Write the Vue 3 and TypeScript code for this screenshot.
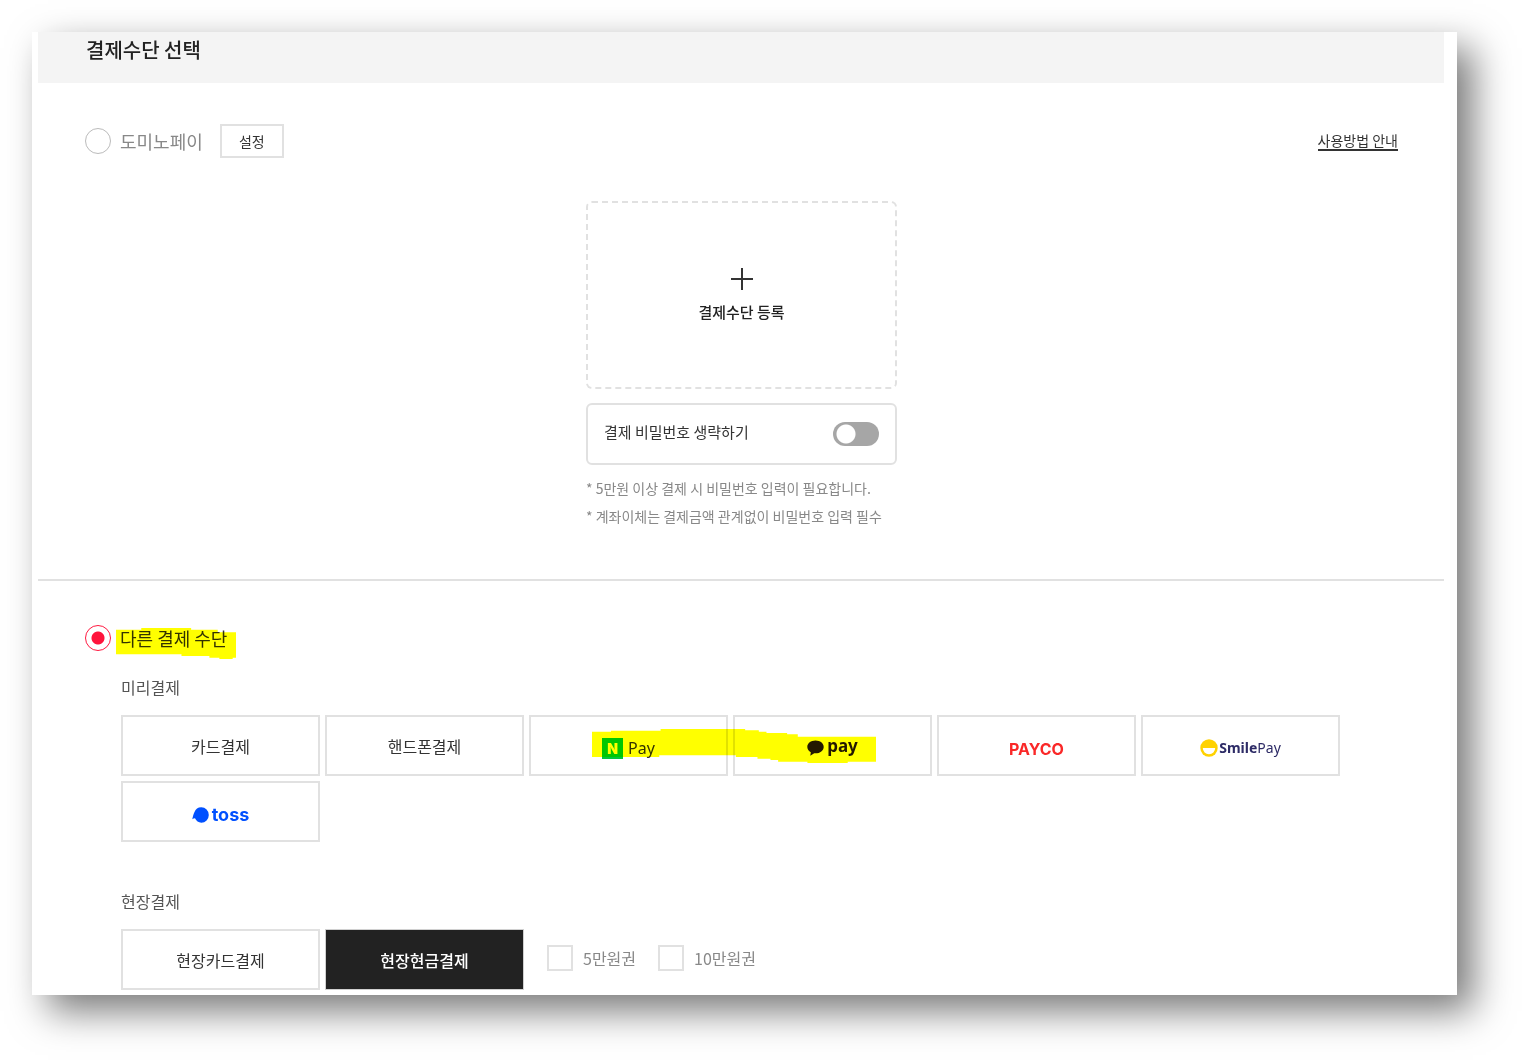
<script setup lang="ts">
import { ref } from 'vue'

type Logo = 'naver' | 'kakao' | 'payco' | 'smile' | 'toss'

interface PayOption {
  id: string
  label: string
  logo?: Logo
}

const prepaid: PayOption[] = [
  { id: 'card', label: '카드결제' },
  { id: 'phone', label: '핸드폰결제' },
  { id: 'naver', label: 'Pay', logo: 'naver' },
  { id: 'kakao', label: 'pay', logo: 'kakao' },
  { id: 'payco', label: 'PAYCO', logo: 'payco' },
  { id: 'smile', label: 'SmilePay', logo: 'smile' },
  { id: 'toss', label: 'toss', logo: 'toss' },
]

const onSite: PayOption[] = [
  { id: 'site-card', label: '현장카드결제' },
  { id: 'site-cash', label: '현장현금결제' },
]

const bills = [
  { id: 'bill-5', label: '5만원권' },
  { id: 'bill-10', label: '10만원권' },
]

const method = ref<'domino' | 'other'>('other')
const selected = ref('site-cash')
const skipPassword = ref(false)
const checkedBills = ref<string[]>([])
</script>

<template>
  <main class="card">
    <header class="head">
      <h1>결제수단 선택</h1>
    </header>

    <section class="domino">
      <div class="row">
        <input id="m-domino" v-model="method" class="radio" type="radio" name="method" value="domino" />
        <label class="method muted" for="m-domino">도미노페이</label>
        <button class="setting" type="button">설정</button>
        <a class="guide" href="#guide">사용방법 안내</a>
      </div>

      <div class="register-area">
        <button class="register" type="button">
          <svg width="24" height="24" viewBox="0 0 24 24" aria-hidden="true">
            <path d="M12 1v22M1 12h22" stroke="#333" stroke-width="2" fill="none" />
          </svg>
          <span>결제수단 등록</span>
        </button>
        <div class="skip">
          <label for="skip">결제 비밀번호 생략하기</label>
          <input id="skip" v-model="skipPassword" class="switch" type="checkbox" role="switch" />
        </div>
        <ul class="notes">
          <li>* 5만원 이상 결제 시 비밀번호 입력이 필요합니다.</li>
          <li>* 계좌이체는 결제금액 관계없이 비밀번호 입력 필수</li>
        </ul>
      </div>
    </section>

    <section class="other">
      <div class="row">
        <input id="m-other" v-model="method" class="radio" type="radio" name="method" value="other" />
        <label class="method marked" for="m-other">
          다른 결제 수단
          <svg class="marker" viewBox="169 173 361 93" preserveAspectRatio="none" aria-hidden="true">
            <path d="M169 178h76v-5h150v5h80v8h55v76h-10v4h-40v-4h-30v-5h-84v-5H169z" fill="#ff0" />
          </svg>
        </label>
      </div>

      <div class="groups">
        <h2>미리결제</h2>
        <div class="grid">
          <button
            v-for="o in prepaid"
            :key="o.id"
            type="button"
            class="option"
            :class="[o.logo, { active: selected === o.id }]"
            @click="selected = o.id"
          >
            <span v-if="o.logo === 'naver'" class="n-mark">N</span>
            <svg v-else-if="o.logo === 'kakao'" width="17" height="16" viewBox="0 0 17 16" aria-hidden="true">
              <path
                d="M8.500 .5C3.900.5.300 3.300.300 6.900c0 2.200 1.400 4.200 3.500 5.300L3.300 15.700l3.900-2.500c.4.100.9.100 1.300.100 4.600 0 8.200-2.800 8.200-6.400S13.100.5 8.500.5z"
                fill="#231815"
              />
            </svg>
            <svg v-else-if="o.logo === 'smile'" width="18" height="18" viewBox="0 0 18 18" aria-hidden="true">
              <circle cx="9" cy="9" r="8.700" fill="#ffd200" />
              <path d="M2.800 9h12.400a6.200 6.200 0 0 1-12.400 0z" fill="#fff" />
            </svg>
            <svg v-else-if="o.logo === 'toss'" width="17" height="16" viewBox="0 0 17 16" aria-hidden="true">
              <path
                d="M9.300.3C5.800.3 3.700 2.300 2.500 5 1.600 7 .800 9.500.300 12.300c.8-.5 1.700-.9 2.700-1C4.200 14 6.500 15.700 9.300 15.700a7.500 7.700 0 0 0 0-15.400z"
                fill="#0050ff"
              />
            </svg>
            <span v-if="o.logo === 'smile'"><b>Smile</b>Pay</span>
            <span v-else>{{ o.label }}</span>
          </button>
          <svg class="marker" viewBox="244 88 853 102" preserveAspectRatio="none" aria-hidden="true">
            <path
              d="M244 96h57v-3h149v-5h254v4h41v4h23v4h62v4h32v7h235v75h-85v4H891v-4h-88v-5h-23v-4h-39v-5h-65v-5H446v5H244z"
              fill="#ff0"
            />
          </svg>
        </div>

        <h2 class="second">현장결제</h2>
        <div class="grid">
          <button
            v-for="o in onSite"
            :key="o.id"
            type="button"
            class="option"
            :class="{ active: selected === o.id }"
            @click="selected = o.id"
          >
            {{ o.label }}
          </button>
          <div class="bills">
            <label v-for="b in bills" :key="b.id" :for="b.id">
              <input :id="b.id" v-model="checkedBills" type="checkbox" :value="b.id" />
              {{ b.label }}
            </label>
          </div>
        </div>
      </div>
    </section>
  </main>
</template>

<style>
body {
  background: #fff;
}
</style>

<style scoped>
.card {
  box-sizing: border-box;
  margin: 32px 65px 65px 32px;
  padding: 0 13px 5px 6px;
  background: #fff;
  box-shadow: 16px 16px 36px rgba(0, 0, 0, 0.53);
  color: #333;
  font-family: 'Noto Sans CJK KR', 'Noto Sans', sans-serif;
  font-size: 16px;
  line-height: 24px;
  display: flow-root;
}

button,
input {
  margin: 0;
  font: inherit;
  color: inherit;
}

button {
  padding: 0;
  background: #fff;
  cursor: pointer;
}

svg {
  display: block;
  flex: none;
}

.head {
  padding: 6px 48px 21px;
  background: #f4f4f4;
}

h1 {
  margin: 0;
  font-size: 20px;
  line-height: 24px;
  font-weight: 500;
  color: #222;
}

.domino {
  padding: 41px 46px 49px 47px;
  border-bottom: 2px solid #e1e1e1;
}

.row {
  display: flex;
  align-items: center;
}

.radio {
  appearance: none;
  box-sizing: border-box;
  width: 26px;
  height: 26px;
  border: 1px solid #bbb;
  border-radius: 50%;
  background: #fff;
}

.radio:checked {
  border-color: #ff1940;
  background: radial-gradient(circle, #ff143c 6px, #fff 7px);
}

.method {
  margin-left: 9px;
  font-size: 18px;
  line-height: 26px;
}

.muted {
  color: #888;
}

.setting {
  width: 64px;
  height: 34px;
  margin-left: 17px;
  border: 2px solid #e1e1e1;
  font-size: 14px;
}

.guide {
  margin-left: auto;
  border-bottom: 2px solid #333;
  font-size: 14px;
  line-height: 17px;
  color: #333;
  text-decoration: none;
}

.register-area {
  width: 311px;
  margin: 43px auto 0;
}

.register {
  display: flex;
  flex-direction: column;
  align-items: center;
  justify-content: center;
  gap: 9px;
  width: 100%;
  height: 188px;
  border: 2px dashed #e1e1e1;
  border-radius: 6px;
  font-size: 15px;
  font-weight: 500;
  color: #222;
}

.skip {
  box-sizing: border-box;
  display: flex;
  align-items: center;
  justify-content: space-between;
  height: 62px;
  margin-top: 14px;
  padding: 0 16px;
  border: 2px solid #e1e1e1;
  border-radius: 6px;
  font-size: 15px;
}

.skip label {
  padding-bottom: 4px;
}

.switch {
  appearance: none;
  width: 46px;
  height: 24px;
  border-radius: 12px;
  background: radial-gradient(circle at 13px 12px, #fff 9px, #a6a6a6 10px);
}

.switch:checked {
  background: radial-gradient(circle at 33px 12px, #fff 9px, #ff143c 10px);
}

.notes {
  margin: 9px 0 0;
  padding: 0;
  list-style: none;
  font-size: 14px;
  line-height: 28px;
  white-space: nowrap;
  color: #888;
}

.other {
  padding: 44px 46px 0 47px;
}

.marked {
  position: relative;
}

.marker {
  position: absolute;
  mix-blend-mode: multiply;
  pointer-events: none;
}

.marked .marker {
  top: 3px;
  left: -4px;
  width: 120px;
  height: 31px;
}

.groups {
  padding: 24px 58px 0 36px;
}

h2 {
  margin: 0 0 16px;
  font-size: 16px;
  line-height: 24px;
  font-weight: 400;
  color: #555;
}

.second {
  margin-top: 47px;
}

.grid {
  position: relative;
  display: grid;
  grid-template-columns: repeat(6, 1fr);
  gap: 5px;
}

.grid .marker {
  top: 14px;
  left: 38.6%;
  width: 23.3%;
  height: 34px;
}

.option {
  display: flex;
  align-items: center;
  justify-content: center;
  height: 61px;
  border: 2px solid #e1e1e1;
}

.active {
  border-color: #d0d0d0;
  border-width: 1px;
  background: #222;
  color: #fff;
  font-weight: 500;
}

.naver {
  gap: 5px;
  padding-top: 5px;
  font-family: 'Noto Sans', sans-serif;
}

.n-mark {
  width: 21px;
  height: 21px;
  background: #00c73c;
  color: #fff;
  font-family: Inter, sans-serif;
  font-size: 14px;
  line-height: 21px;
  font-weight: 900;
  text-align: center;
}

.kakao {
  gap: 3px;
  padding-top: 1px;
  font-family: 'Noto Sans', sans-serif;
  font-size: 17px;
  font-weight: 700;
  color: #231815;
}

.kakao svg {
  margin-top: 3px;
}

.payco {
  padding-top: 6px;
  font-family: Inter, sans-serif;
  font-weight: 700;
  color: #fa2828;
}

.smile {
  gap: 1px;
  padding-top: 4px;
  font-family: 'Noto Sans', sans-serif;
  font-size: 14px;
  color: #2d2b66;
}

.toss {
  gap: 3px;
  padding-top: 6px;
  font-family: Inter, sans-serif;
  font-size: 18px;
  font-weight: 700;
  color: #0050ff;
}

.bills {
  grid-column: 3 / -1;
  display: flex;
  align-items: center;
  gap: 22px;
  padding: 0 0 4px 18px;
  color: #888;
}

.bills label {
  display: flex;
  align-items: center;
  gap: 10px;
}

.bills input {
  appearance: none;
  box-sizing: border-box;
  width: 26px;
  height: 26px;
  border: 2px solid #e1e1e1;
  background: #fff;
}

.bills input:checked {
  background: #222;
}
</style>
